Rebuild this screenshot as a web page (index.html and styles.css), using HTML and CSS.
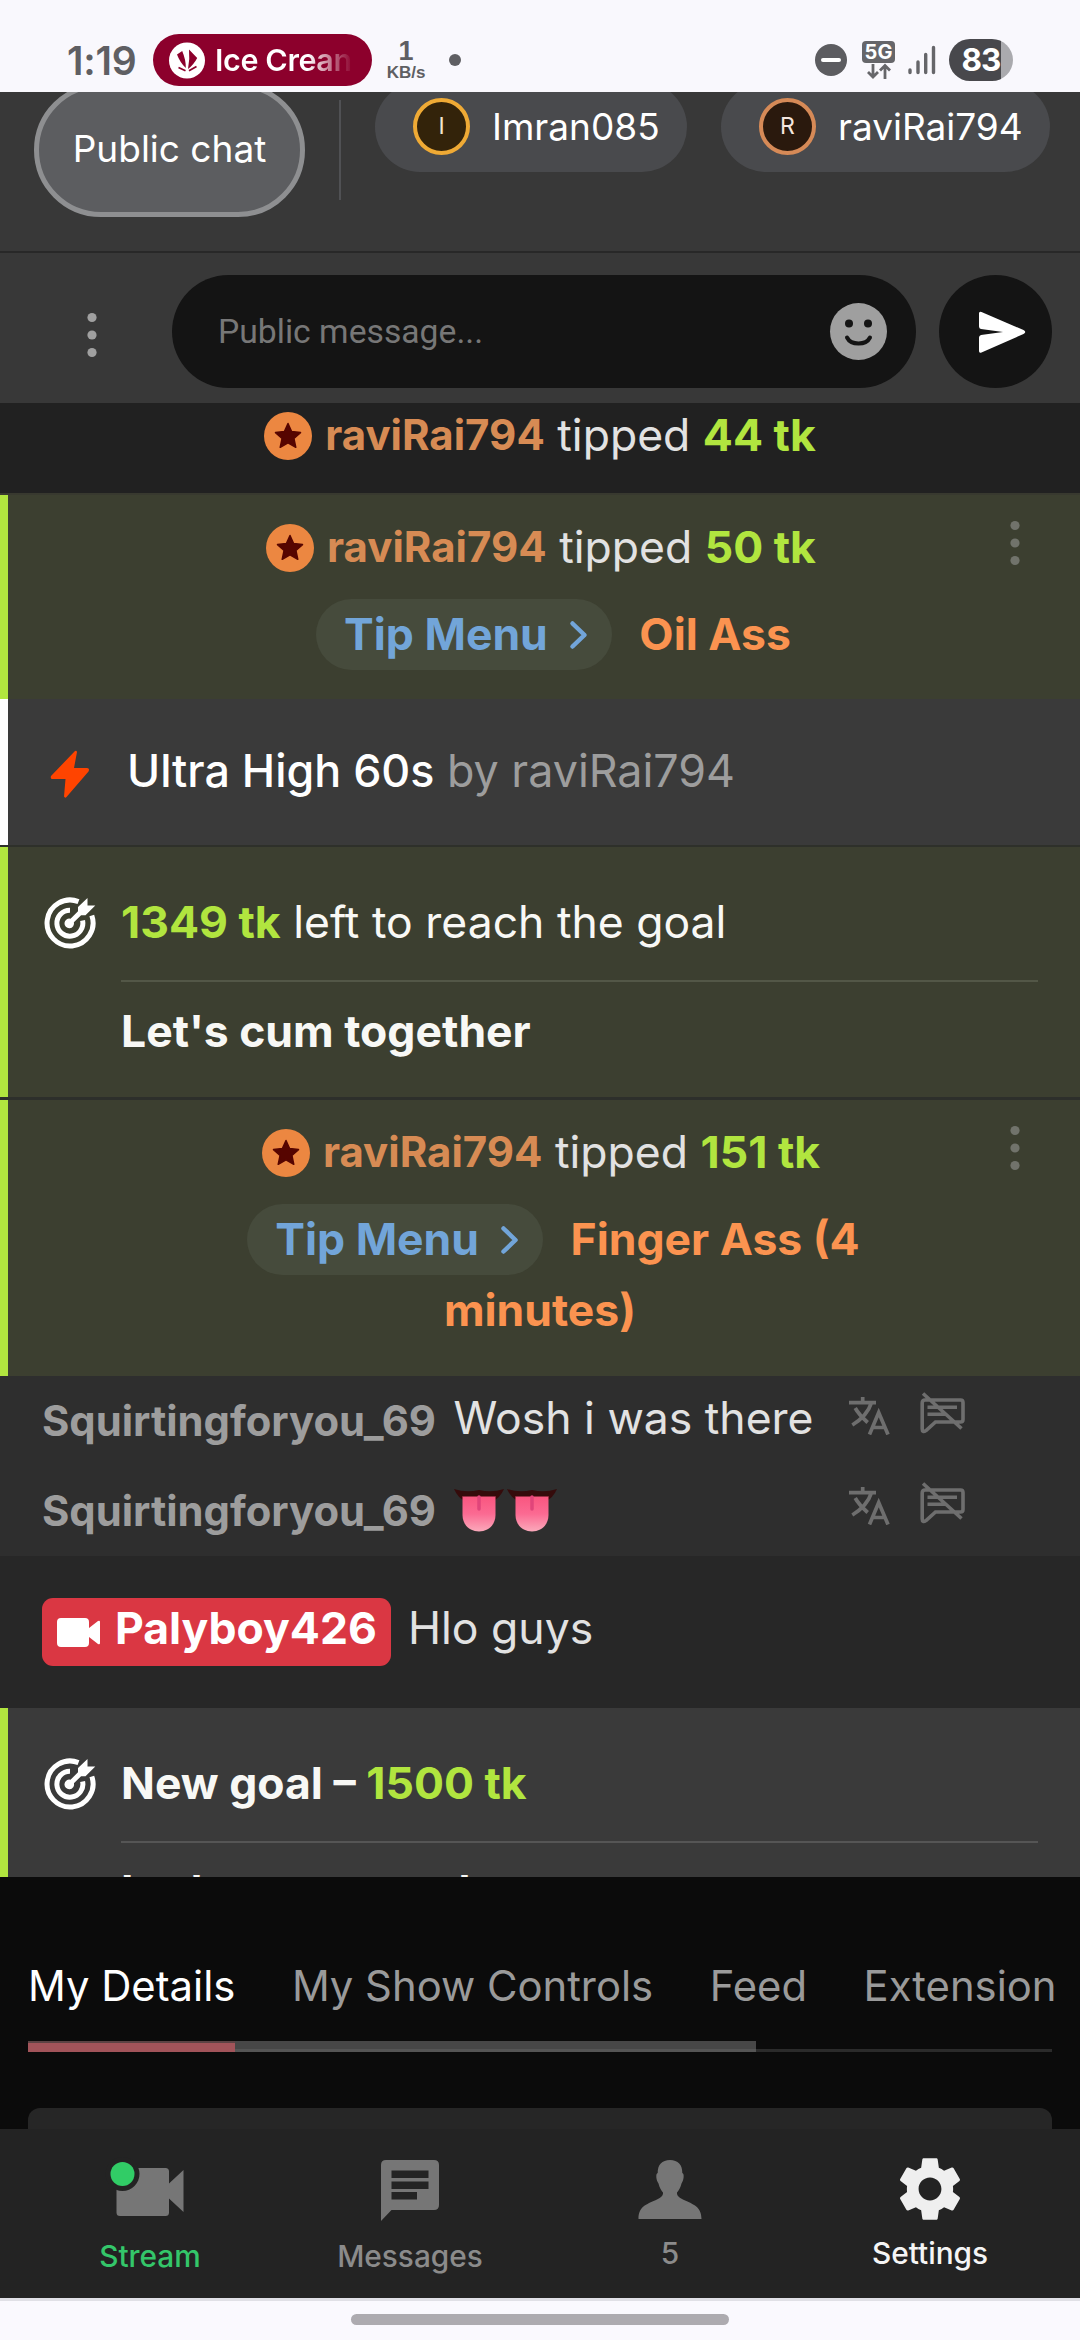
FILE: index.html
```html
<!DOCTYPE html>
<html lang="en">
<head>
<meta charset="utf-8">
<title>Stream chat</title>
<link rel="stylesheet" href="styles.css">
</head>
<body>
<svg class="sprite" width="0" height="0">
  <symbol id="star" viewBox="0 0 48 48"><circle cx="24" cy="24" r="24" fill="#ec8741"/><path d="M24 11.5l3.6 8.1 8.9 1-6.6 5.9 1.9 8.8-7.8-4.5-7.8 4.5 1.9-8.8-6.6-5.9 8.9-1z" fill="#560500" stroke="#560500" stroke-width="1.5" stroke-linejoin="round"/></symbol>
  <symbol id="dots" viewBox="0 0 12 46"><g fill="currentColor"><circle cx="6" cy="5.5" r="4.6"/><circle cx="6" cy="23" r="4.6"/><circle cx="6" cy="40.5" r="4.6"/></g></symbol>
  <symbol id="target" viewBox="0 0 52 52"><g fill="none" stroke="#fff" stroke-width="5"><path d="M34.5 4.6A23 23 0 1 0 47.8 18.5"/><path d="M26 13.2A13 13 0 1 0 38.6 23.5"/></g><path d="M43.5 1v7.6h7.8L41.5 18.2h-4.4L29.9 25.2A4.8 4.8 0 1 1 26.5 21.8L34 14.3V10z" fill="#fff"/></symbol>
  <symbol id="translate" viewBox="0 0 42 38"><g fill="none" stroke="currentColor" stroke-width="3.7"><path d="M0 5.600h27M13.700 0v5.600M22.500 5.600C19.500 15 13 22 3.300 28M6.200 11c3 5.500 7.500 10 12.500 14.500"/><path d="M20.500 37.500L29.700 15.500L39 37.500M23.500 30.500h12.500"/></g></symbol>
  <symbol id="mute" viewBox="0 0 46 42"><g fill="none" stroke="currentColor" stroke-width="3.6"><path d="M5 8H40.500Q43 8 43 10.500V27.500Q43 30 40.500 30H15.500L6 38.500Q2.200 41 2.200 37V11Q2.200 8 5 8zM7.500 15.300H37M7.500 22.200H25M3 1.500L41.500 36.500"/></g></symbol>
  <symbol id="tongue" viewBox="0 0 50 44"><path d="M0 1Q12 5 25 2Q38 5 50 1Q46 10 39 13H11Q4 10 0 1z" fill="#350b0b"/><path d="M8.500 8H41.500V27C41.500 37 34 43.500 25 43.500S8.500 37 8.500 27z" fill="url(#tg)"/><path d="M8.500 5H41.500V8.500H8.500z" fill="#350b0b"/><path d="M25 9V21" stroke="#e0457a" stroke-width="3.500" stroke-linecap="round"/></symbol>
  <defs><linearGradient id="tg" x1="0" y1="0" x2="0" y2="1"><stop offset="0" stop-color="#f9557f"/><stop offset=".5" stop-color="#fb6a92"/><stop offset="1" stop-color="#fba9bb"/></linearGradient></defs>
</svg>
<div class="screen">
  <header class="status">
    <span class="clock">1:19</span>
    <span class="live-pill">
      <svg width="36" height="37" viewBox="0 0 36 37"><circle cx="18" cy="18.500" r="18" fill="#fff"/><g fill="#8c002c"><path d="M8 12.500L13.200 9Q17 18 16.800 26Q11 20.500 8 12.500zM20 7.500L28.200 16Q24.500 23 19 27Q21 17 20 7.500z"/><path d="M9.500 25.500l7 3.200M27.500 24.500l-7.500 4.200" stroke="#8c002c" stroke-width="1.800"/></g></svg>
      <span class="live-text">Ice Crean</span>
    </span>
    <span class="net"><b>1</b><small>KB/s</small></span>
    <i class="notif"></i>
    <span class="grow"></span>
    <svg class="st-dnd" width="32" height="32" viewBox="0 0 32 32"><circle cx="16" cy="16" r="16" fill="#5c5c60"/><path d="M8 16h16" stroke="#fff" stroke-width="4" stroke-linecap="round"/></svg>
    <span class="fiveg"><b>5G</b><svg width="26" height="15" viewBox="0 0 26 15" fill="none" stroke="#66666a" stroke-width="2.800"><path d="M7 0v13M2 8l5 5 5-5M19 15V1.500M14 6.500l5-5 5 5"/></svg></span>
    <svg class="st-sig" width="28" height="30" viewBox="0 0 28 30" stroke="#66666a" stroke-width="3.400" stroke-linecap="round"><path d="M2 25v2.500M10 17v10.500M17.700 9.500v18M25.500 2.500v25"/></svg>
    <span class="battery">83</span>
  </header>

  <nav class="chats">
    <span class="chat-tab active">Public chat</span>
    <i class="sep"></i>
    <span class="chat-tab user"><i class="avatar gold">I</i>Imran085</span>
    <span class="chat-tab user second"><i class="avatar bronze">R</i>raviRai794</span>
  </nav>

  <section class="composer">
    <svg class="menu" width="12" height="46"><use href="#dots"/></svg>
    <div class="field"><span>Public message...</span>
      <svg width="57" height="57" viewBox="0 0 57 57"><circle cx="28.500" cy="28.500" r="28.500" fill="#9f9f9f"/><g fill="#141414"><circle cx="19" cy="20.500" r="4"/><circle cx="38" cy="20.500" r="4"/></g><path d="M17 34.500Q20 40.500 28.500 40.500T40 34.500" fill="none" stroke="#141414" stroke-width="4" stroke-linecap="round"/></svg>
    </div>
    <div class="send"><svg width="50" height="44" viewBox="0 0 50 44"><path d="M2 3.500Q2 1 4.500 2L46.500 20Q50 22 46.500 24L4.500 42.500Q2 43.500 2 41V27.500Q2 25.500 4 25L26 22L4 19Q2 18.500 2 16.500z" fill="#fff"/></svg></div>
  </section>

  <main class="feed">
    <div class="row tip plain"><div class="tip-line"><svg width="48" height="48"><use href="#star"/></svg><b class="name">raviRai794</b>&nbsp;tipped&nbsp;<b class="tk">44 tk</b></div></div>

    <div class="row tip olive first">
      <div class="tip-line"><svg width="48" height="48"><use href="#star"/></svg><b class="name">raviRai794</b>&nbsp;tipped&nbsp;<b class="tk">50 tk</b></div>
      <div class="tip-what"><span class="tip-menu">Tip Menu<svg width="18" height="28" viewBox="0 0 18 28"><path d="M2.500 2.500L14.500 14L2.500 25.500" fill="none" stroke="#72a5d9" stroke-width="4.500" stroke-linecap="round" stroke-linejoin="round"/></svg></span> Oil Ass</div>
      <svg class="row-menu" width="12" height="46"><use href="#dots"/></svg>
    </div>

    <div class="row toy">
      <svg width="40" height="48" viewBox="0 0 40 48"><path d="M25 1L1 26Q0 29 2.500 29H15.500L14 46.500Q15 48.500 16.500 47L38.500 21.500Q40 18 37 18H24L27 2Q26.500 0 25 1z" fill="#ff4400"/></svg>
      <p><span class="toy-name">Ultra High 60s</span> by raviRai794</p>
    </div>

    <div class="row goal olive">
      <svg width="52" height="52"><use href="#target"/></svg>
      <div class="goal-body"><p class="goal-top"><b class="tk">1349 tk</b> left to reach the goal</p><p class="goal-name">Let's cum together</p></div>
    </div>

    <div class="row tip olive last">
      <div class="tip-line"><svg width="48" height="48"><use href="#star"/></svg><b class="name">raviRai794</b>&nbsp;tipped&nbsp;<b class="tk">151 tk</b></div>
      <div class="tip-what"><span class="tip-menu">Tip Menu<svg width="18" height="28" viewBox="0 0 18 28"><path d="M2.500 2.500L14.500 14L2.500 25.500" fill="none" stroke="#72a5d9" stroke-width="4.500" stroke-linecap="round" stroke-linejoin="round"/></svg></span> Finger Ass (4 minutes)</div>
      <svg class="row-menu" width="12" height="46"><use href="#dots"/></svg>
    </div>

    <div class="msgs">
      <div class="msg"><b>Squirtingforyou_69</b><span class="body">Wosh i was there</span><svg class="tr" width="42" height="38"><use href="#translate"/></svg><svg class="mu" width="46" height="42"><use href="#mute"/></svg></div>
      <div class="msg"><b>Squirtingforyou_69</b><span class="body emoji"><svg width="50" height="44"><use href="#tongue"/></svg><svg width="50" height="44"><use href="#tongue"/></svg></span><svg class="tr" width="42" height="38"><use href="#translate"/></svg><svg class="mu" width="46" height="42"><use href="#mute"/></svg></div>
    </div>

    <div class="row hello"><span class="badge"><svg width="43" height="29" viewBox="0 0 43 29"><path d="M4 0H28Q32 0 32 4V10L41 3Q43 2 43 4V25Q43 27 41 26L32 19V25Q32 29 28 29H4Q0 29 0 25V4Q0 0 4 0z" fill="#fff"/></svg><span class="lift">Palyboy426</span></span><span class="lift">Hlo guys</span></div>

    <div class="row goal newgoal">
      <svg width="52" height="52"><use href="#target"/></svg>
      <div class="goal-body"><p class="goal-top"><b>New goal – <span class="tk">1500 tk</span></b></p><p class="goal-name">Let's cum together</p></div>
    </div>
  </main>

  <section class="details">
    <div class="tabs"><span class="on">My Details</span><span>My Show Controls</span><span>Feed</span><span>Extensions</span></div>
    <div class="track"><i class="done"></i><i class="thumb"></i></div>
    <div class="card"></div>
  </section>

  <nav class="bottom">
    <div class="item green"><svg width="72" height="62" viewBox="5.500 0 72 62"><path d="M8 9H57Q60.500 9 60.500 12.500V24.500L75 11V53L60.500 39.500V53.500Q60.500 57 57 57H11.500Q8 57 8 53.500z" fill="#767676"/><circle cx="14" cy="15" r="17" fill="#232323"/><circle cx="14" cy="15" r="12" fill="#31cc66"/></svg><span>Stream</span></div>
    <div class="item"><svg width="58" height="62" viewBox="0 0 58 62"><path d="M5 1H53Q58 1 58 6V46Q58 51 53 51H10.500L0 62V6Q0 1 5 1zM10.500 11.500v7.500h37v-7.500zM10.500 22.500v7.500h37v-7.500zM10.500 33v7.500h25.500v-7.500z" fill="#767676" fill-rule="evenodd"/></svg><span>Messages</span></div>
    <div class="item up"><svg width="64" height="62" viewBox="0 0 64 62"><path d="M32 1C24 1 19.500 6 19.700 14C17.500 14.500 18 21 20.500 24.500C21.500 29 23.500 31.500 25 33.500C25.500 37 22 39 18 41C8 45.500 .5 47.500 .5 60H63.500C63.500 47.500 55.500 45.500 46 41C42 39 38.500 37 39 33.500C40.500 31.500 42.500 29 43.500 24.500C46 21 46.500 14.500 44.300 14C44.500 6 40 1 32 1z" fill="#767676"/></svg><span>5</span></div>
    <div class="item up white"><svg width="74" height="74" viewBox="0 0 24 24"><path d="M19.430 12.980c.04-.32.07-.64.07-.98s-.03-.66-.07-.98l2.110-1.650c.19-.15.240-.42.120-.64l-2-3.460c-.12-.22-.39-.3-.61-.22l-2.490 1c-.52-.4-1.080-.73-1.690-.98l-.38-2.650C14.460 2.180 14.250 2 14 2h-4c-.25 0-.46.18-.49.42l-.38 2.650c-.61.25-1.170.59-1.690.98l-2.490-1c-.23-.09-.49 0-.61.22l-2 3.460c-.13.22-.07.49.120.64l2.110 1.650c-.04.32-.07.65-.07.98s.03.66.07.98l-2.110 1.650c-.19.15-.24.42-.12.64l2 3.460c.12.22.39.3.61.22l2.490-1c.52.4 1.080.73 1.690.98l.38 2.650c.03.24.24.42.49.42h4c.25 0 .46-.18.49-.42l.38-2.650c.61-.25 1.170-.59 1.690-.98l2.490 1c.23.09.49 0 .61-.22l2-3.460c.12-.22.07-.49-.12-.64l-2.110-1.650zM12 15.700c-2.040 0-3.700-1.660-3.700-3.700s1.660-3.700 3.700-3.700 3.700 1.660 3.700 3.700-1.660 3.700-3.700 3.700z" fill="#efefef"/></svg><span>Settings</span></div>
  </nav>
  <footer class="gesture"><i></i></footer>
</div>
</body>
</html>
```
FILE: styles.css
```css
* { box-sizing: border-box; margin: 0; padding: 0; }
body { background: #f9f8fd; font-family: Inter, sans-serif; }
i { font-style: normal; display: block; }
svg { display: block; flex: none; overflow: visible; }
.sprite { position: absolute; }
.screen { width: 1080px; height: 2340px; display: flex; flex-direction: column; overflow: hidden; font-size: 44.5px; color: #e2e2e2; }
.screen > * { flex: none; }

.status { height: 92px; padding: 28px 67px 0 67px; display: flex; align-items: center; color: #5f5f63; background: #f9f8fd; }
.clock { width: 86px; font-size: 39px; font-weight: 600; letter-spacing: -.2px; white-space: nowrap; }
.live-pill { width: 219px; height: 52px; border-radius: 26px; background: #8c002c; display: flex; align-items: center; padding-left: 16px; gap: 10px; }
.live-text { width: 142px; overflow: hidden; white-space: nowrap; font-size: 30.5px; font-weight: 600; line-height: 50px; letter-spacing: -.4px; color: transparent; background: linear-gradient(90deg, #fff 65%, #8c002c 97%); background-clip: text; -webkit-background-clip: text; }
.net { width: 68px; display: flex; flex-direction: column; align-items: center; font-family: "Liberation Sans", sans-serif; }
.net b { font-size: 27px; line-height: 21px; }
.net small { font-size: 17px; line-height: 15px; font-weight: 700; margin-top: 3px; }
.notif { width: 12px; height: 12px; border-radius: 50%; background: #5f5f63; margin-left: 9px; }
.grow { flex: 1; }
.fiveg { margin-left: 15px; width: 33px; display: flex; flex-direction: column; align-items: center; }
.fiveg b { width: 33px; height: 22px; border-radius: 4px; background: #66666a; color: #fff; font-size: 20px; line-height: 22px; text-align: center; margin-bottom: 1px; }
.st-sig { margin-left: 13px; }
.battery { margin-left: 13px; width: 64px; height: 42px; border-radius: 21px; background: linear-gradient(90deg, #48484c 52px, #aaaaae 52px); color: #fff; font-size: 31.5px; font-weight: 700; line-height: 42px; text-align: center; letter-spacing: -1px; }

.chats { height: 161px; background: #383838; border-bottom: 2px solid #282828; display: flex; align-items: flex-start; padding-left: 34px; overflow: hidden; font-size: 37px; color: #fff; }
.chat-tab { white-space: nowrap; display: flex; align-items: center; padding-bottom: 1px; }
.chat-tab.active { margin-top: -9px; width: 271px; height: 134px; border: 5px solid #8e8f91; border-radius: 67px; background: #5c5d60; justify-content: center; padding-bottom: 3px; }
.sep { width: 2px; height: 100px; margin: 8px 34px 0 34px; background: #505154; }
.user { margin-top: -10px; width: 312px; height: 90px; border-radius: 45px; background: #494a4d; padding-left: 38px; }
.user.second { margin-left: 34px; width: 329px; }
.avatar { flex: none; width: 57px; height: 57px; border-radius: 50%; border: 4px solid; margin-right: 22px; font-size: 23px; line-height: 49px; text-align: center; }
.gold { background: #33230a; border-color: #efaa35; color: #f5e6cf; }
.bronze { background: #2a190d; border-color: #d68a57; color: #f5e6df; }

.composer { height: 150px; background: #383838; display: flex; align-items: center; padding: 7px 28px 0 86px; }
.menu { color: #a0a0a0; margin-top: 6px; }
.field { margin-left: 74px; width: 744px; height: 113px; border-radius: 57px; background: #141414; padding: 0 29px 0 46px; display: flex; align-items: center; justify-content: space-between; font-family: Roboto, sans-serif; font-size: 33.7px; color: #777; }
.send { margin-left: 23px; width: 113px; height: 113px; border-radius: 50%; background: #141414; display: flex; align-items: center; justify-content: center; padding-left: 12px; }

.feed { height: 1474px; overflow: hidden; background: #212121; }
b { font-weight: 700; }
.tk { color: #b1e53f; }
.olive { background: #3c3f30; box-shadow: inset 8px 0 #b1e53f; }
.tip { position: relative; text-align: center; padding-right: 6px; padding-left: 8px; }
.tip-line { display: flex; justify-content: center; align-items: center; height: 64px; padding-bottom: 3px; }
.tip-line svg { margin-top: 3px; }
.name { font-size: 42px; color: #d78b54; margin-left: 13px; line-height: 60px; }
.plain { height: 90px; padding-top: 1px; padding-right: 8px; }
.first { height: 206px; padding-top: 21px; border-top: 2px solid #38392f; }
.tip-what { padding: 0 135px 0 133px; margin-top: 19px; line-height: 70px; font-weight: 700; color: #fb9350; }
.tip-menu { display: inline-block; height: 71px; border-radius: 36px; background: #464b3c; color: #72a5d9; padding: 0 24px 0 28px; margin: 0 17px 0 27px; }
.tip-menu svg { display: inline-block; margin-left: 22px; vertical-align: 1px; }
.row-menu { position: absolute; right: 59px; top: 25px; color: #71736b; }
.toy { height: 148px; box-shadow: inset 8px 0 #fff; border-bottom: 2px solid #2e302a; background: #3a3a3a; display: flex; align-items: center; padding-left: 50px; color: #9d9d9d; }
.toy svg { margin-top: 4px; }
.toy p { margin: -2px 0 0 37px; font-size: 44.8px; }
.toy-name { color: #fff; font-weight: 500; }
.goal { height: 253px; display: flex; padding: 50px 42px 0 44px; border-bottom: 3px solid #2d2f2b; color: #f8f8f5; }
.goal-body { margin-left: 25px; flex: 1; }
.goal-top { height: 85px; line-height: 51px; border-bottom: 2px solid #535747; }
.goal-name { font-weight: 700; line-height: 50px; padding-top: 24px; }
.last { height: 276px; padding-top: 21px; }
.msgs { height: 180px; background: #2e2e2e; }
.msg { height: 90px; display: flex; padding-left: 42px; align-items: flex-start; }
.msg b { width: 392px; font-size: 41.8px; line-height: 50px; margin-top: 20px; color: #9d9d9d; white-space: nowrap; }
.body { width: 415px; margin-left: 19.5px; line-height: 50px; margin-top: 17px; white-space: nowrap; }
.emoji { display: flex; gap: 3px; margin-top: 22px; }
.tr { margin: 21px 0 0 -19.5px; color: #6e6e6e; }
.mu { margin: 16px 0 0 29px; color: #6e6e6e; }
.hello { height: 152px; background: #272727; display: flex; align-items: center; padding-left: 42px; }
.badge { width: 349px; height: 68px; border-radius: 11px; background: #da3743; color: #fff; font-weight: 700; display: flex; align-items: center; padding-left: 15px; gap: 15px; margin-right: 17px; }
.lift { padding-bottom: 8px; }
.newgoal { background: #3a3a3a; box-shadow: inset 8px 0 #b1e53f; }
.newgoal .goal-top { border-color: #555; }
.newgoal .goal-name { padding-top: 23px; }

.details { height: 252px; background: #0b0b0b; padding: 85px 24px 0 28px; }
.tabs { display: flex; gap: 56.5px; font-size: 41.8px; line-height: 48px; color: #9a9a9a; white-space: nowrap; overflow: hidden; }
.tabs .on { color: #fff; }
.track { height: 11px; margin: 31px 4px 0 0; display: flex; align-items: flex-start; background: linear-gradient(#0b0b0b 8px, #2b2b2b 8px); }
.done { width: 207px; height: 11px; background: linear-gradient(#5c4344 2px, #a2545a 2px); }
.thumb { width: 521px; height: 11px; background: linear-gradient(#474747 8px, #555 8px); }
.card { height: 21px; margin: 56px 4px 0 0; border-radius: 12px 12px 0 0; background: #262626; }

.bottom { height: 169px; background: #232323; padding: 0 20px; display: flex; font-size: 29.8px; font-weight: 500; }
.item { width: 260px; height: 169px; display: flex; flex-direction: column; align-items: center; justify-content: space-between; padding: 30px 0 23px; color: #8b8b8b; }
.item span { line-height: 38px; }
.up { padding-bottom: 26px; }
.green { color: #34c66a; }
.white { color: #f5f5f5; padding-top: 23px; }
.gesture { height: 42px; background: #faf9fe; border-top: 3px solid #e0e0e6; padding-top: 13px; }
.gesture i { width: 378px; height: 11px; border-radius: 6px; margin: 0 auto; background: #adabb0; }
```
